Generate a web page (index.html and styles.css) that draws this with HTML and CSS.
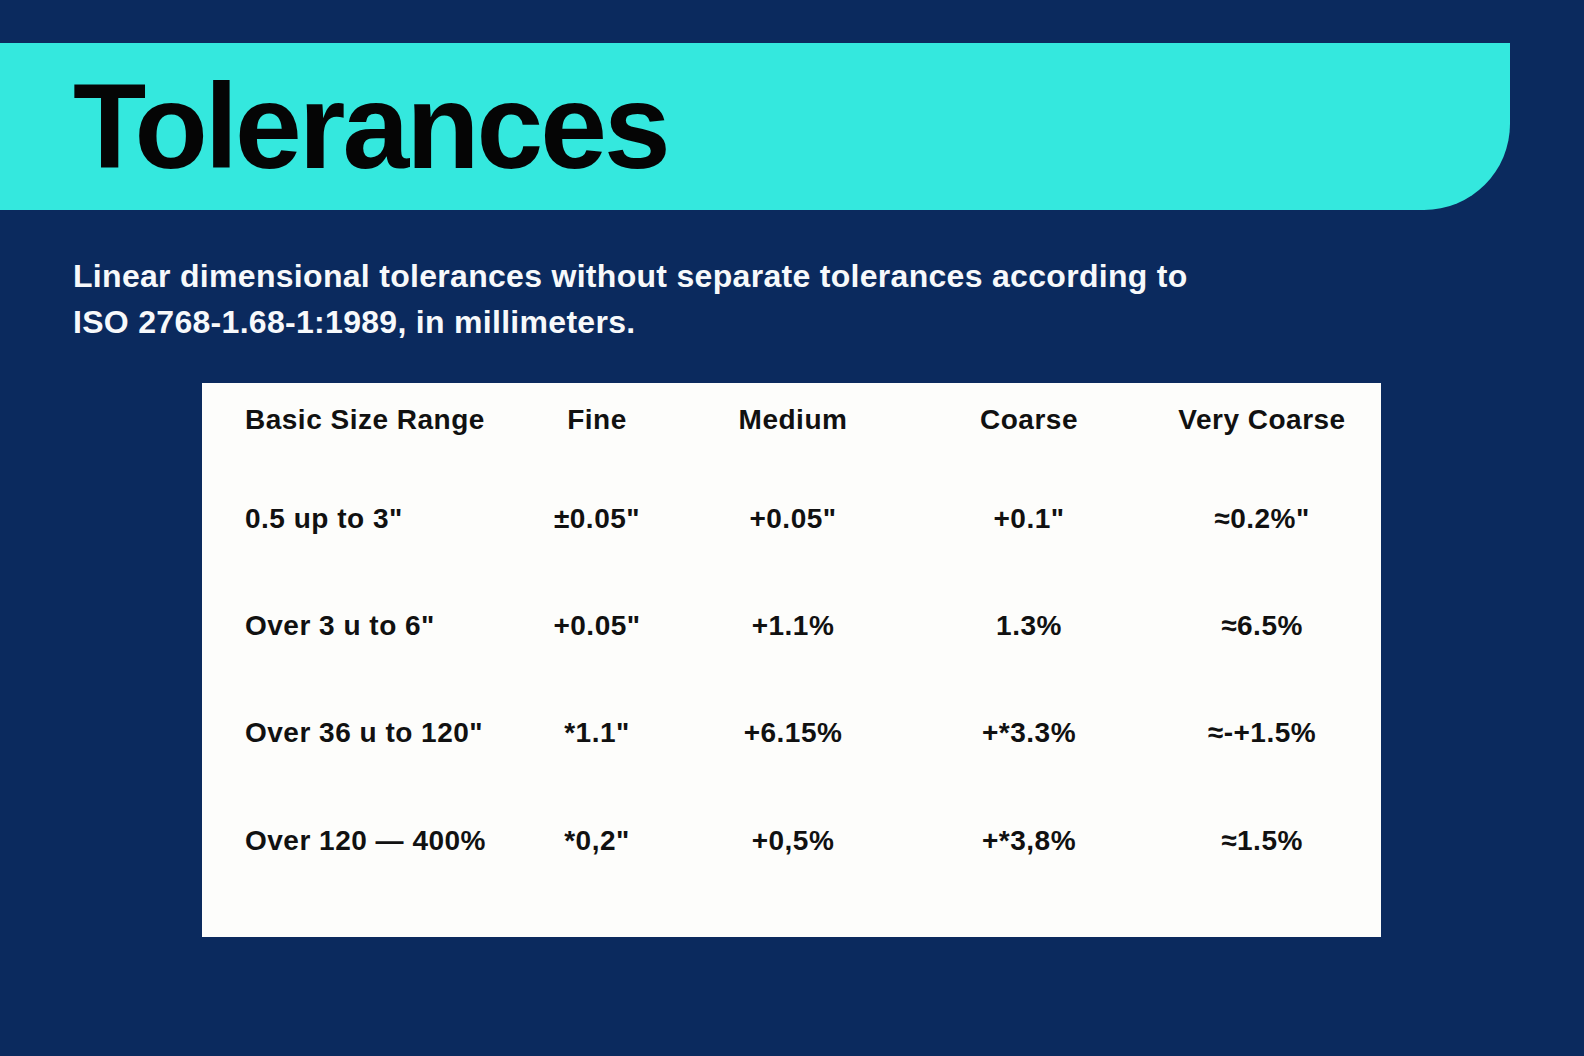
FILE: index.html
```html
<!DOCTYPE html>
<html lang="en">
<head>
<meta charset="utf-8">
<title>Tolerances</title>
<link rel="stylesheet" href="styles.css">
</head>
<body>
<header class="banner">
  <h1 class="title">Tolerances</h1>
</header>
<p class="intro">Linear dimensional tolerances without separate tolerances according to<br>ISO 2768-1.68-1:1989, in millimeters.</p>
<section class="card">
  <div class="grid">
    <div class="cell first">Basic Size Range</div>
    <div class="cell">Fine</div>
    <div class="cell">Medium</div>
    <div class="cell">Coarse</div>
    <div class="cell">Very Coarse</div>

    <div class="cell first">0.5 up to 3"</div>
    <div class="cell">±0.05"</div>
    <div class="cell">+0.05"</div>
    <div class="cell">+0.1"</div>
    <div class="cell">≈0.2%"</div>

    <div class="cell first">Over 3 u to 6"</div>
    <div class="cell">+0.05"</div>
    <div class="cell">+1.1%</div>
    <div class="cell">1.3%</div>
    <div class="cell">≈6.5%</div>

    <div class="cell first">Over 36 u to 120"</div>
    <div class="cell">*1.1"</div>
    <div class="cell">+6.15%</div>
    <div class="cell">+*3.3%</div>
    <div class="cell">≈-+1.5%</div>

    <div class="cell first">Over 120 — 400%</div>
    <div class="cell">*0,2"</div>
    <div class="cell">+0,5%</div>
    <div class="cell">+*3,8%</div>
    <div class="cell">≈1.5%</div>
  </div>
</section>
</body>
</html>
```

FILE: styles.css
```css
html, body {
  margin: 0;
  padding: 0;
}
body {
  background: #0b2a5e;
  font-family: "Liberation Sans", Arial, sans-serif;
  width: 1584px;
  height: 1056px;
  overflow: hidden;
}
.banner {
  margin-top: 43px;
  width: 1510px;
  height: 167px;
  box-sizing: border-box;
  padding: 23px 0 0 73px;
  background: #34e8de;
  border-bottom-right-radius: 86px;
}
.title {
  margin: 0;
  font-size: 120px;
  line-height: 120px;
  font-weight: 700;
  letter-spacing: -3px;
  color: #050505;
}
.intro {
  margin: 43px 0 0 73px;
  font-size: 32px;
  line-height: 46px;
  font-weight: 700;
  letter-spacing: 0.3px;
  color: #f7f9fb;
  white-space: nowrap;
}
.card {
  margin: 38px 0 0 202px;
  width: 1179px;
  height: 554px;
  box-sizing: border-box;
  padding: 21px 23px 0 43px;
  background: #fdfdfb;
}
.grid {
  display: grid;
  grid-template-columns: 255px 194px 198px 274px 192px;
  grid-template-rows: 99px 107px 107px 108px 32px;
  align-items: start;
}
.cell {
  font-size: 28px;
  line-height: 32px;
  font-weight: 700;
  letter-spacing: 0.5px;
  color: #111111;
  text-align: center;
  white-space: nowrap;
}
.cell.first {
  text-align: left;
}
```
